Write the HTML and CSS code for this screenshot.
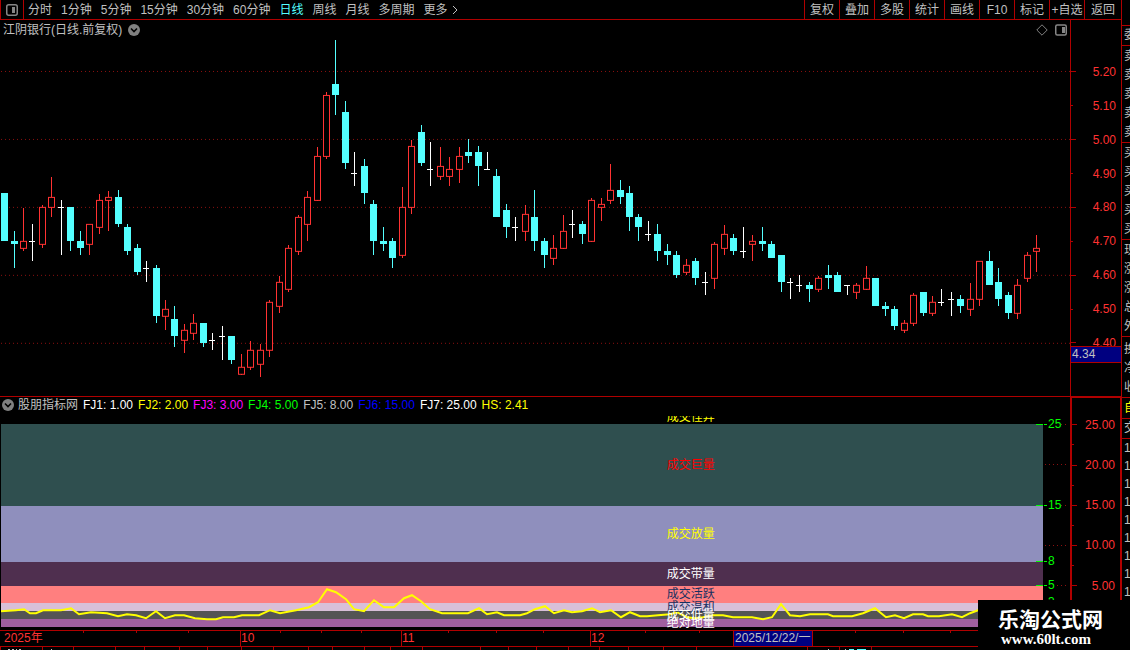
FILE: index.html
```html
<!DOCTYPE html>
<html lang="zh-CN">
<head>
<meta charset="utf-8">
<title>江阴银行 日线</title>
<link rel="stylesheet" href="styles.css">
</head>
<body>
<div class="terminal">
  <main class="workspace">
    <header class="toolbar">
      <button class="layout-toggle" aria-label="布局">
        <svg width="12" height="12" viewBox="0 0 12 12"><rect x="0.75" y="0.75" width="10.5" height="10.5" rx="2" fill="none" stroke="#868686" stroke-width="1.5"/><rect x="6" y="3" width="3" height="6" fill="#868686"/></svg>
      </button>
      <nav class="periods">
        <button>分时</button>
        <button>1分钟</button>
        <button>5分钟</button>
        <button>15分钟</button>
        <button>30分钟</button>
        <button>60分钟</button>
        <button class="active">日线</button>
        <button>周线</button>
        <button>月线</button>
        <button>多周期</button>
        <button class="more">更多 <svg width="6" height="10" viewBox="0 0 6 10"><path d="M1 1l4 4-4 4" fill="none" stroke="#c0c0c0"/></svg></button>
      </nav>
      <div class="tools">
        <button>复权</button>
        <button>叠加</button>
        <button>多股</button>
        <button>统计</button>
        <button>画线</button>
        <button>F10</button>
        <button>标记</button>
        <button>+自选</button>
        <button>返回</button>
      </div>
    </header>

    <section class="panel price">
      <div class="plot">
        <svg class="canvas" id="candles" viewBox="0 20 1070 376" preserveAspectRatio="none" aria-label="K线图"></svg>
        <div class="title">
          <h1>江阴银行(日线.前复权)</h1>
          <svg width="12" height="12" viewBox="0 0 12 12"><circle cx="6" cy="6" r="6" fill="#808080"/><path d="M3 4.5l3 3 3-3" fill="none" stroke="#000" stroke-width="1.6"/></svg>
          <span class="title-icons">
            <svg width="12" height="12" viewBox="0 0 12 12"><path d="M6 .8L11.2 6 6 11.2.8 6z" fill="none" stroke="#808080"/></svg>
            <svg width="12" height="12" viewBox="0 0 12 12"><rect x="0.75" y="1" width="10.5" height="10" rx="1.5" fill="none" stroke="#868686" stroke-width="1.5"/><rect x="7" y="3" width="3" height="6" fill="#868686"/></svg>
          </span>
        </div>
      </div>
      <div class="axis">
        <ol>
          <li>5.20</li><li class="minor">5.10</li><li>5.00</li><li class="minor">4.90</li><li>4.80</li><li class="minor">4.70</li><li>4.60</li><li class="minor">4.50</li><li>4.40</li>
        </ol>
        <span class="cursor-price">4.34</span>
      </div>
    </section>

    <section class="panel turnover">
      <div class="plot">
        <div class="legend">
          <svg width="12" height="12" viewBox="0 0 12 12"><circle cx="6" cy="6" r="6" fill="#808080"/><path d="M3 4.5l3 3 3-3" fill="none" stroke="#000" stroke-width="1.6"/></svg>
          <span class="grey">股朋指标网</span>
          <span class="white">FJ1: 1.00</span>
          <span class="yellow">FJ2: 2.00</span>
          <span class="magenta">FJ3: 3.00</span>
          <span class="green">FJ4: 5.00</span>
          <span class="grey">FJ5: 8.00</span>
          <span class="blue">FJ6: 15.00</span>
          <span class="white">FJ7: 25.00</span>
          <span class="yellow">HS: 2.41</span>
        </div>
        <div class="zones">
          <div class="bands">
            <div class="band extreme yellow"><span>成交怪异</span></div>
            <div class="band huge"><span>成交巨量</span></div>
            <div class="band heavy yellow"><span>成交放量</span></div>
            <div class="band raised white"><span>成交带量</span></div>
            <div class="band active-zone navy"><span>成交活跃</span></div>
            <div class="band mild navy"><span>成交温和</span></div>
            <div class="band low white"><span>成交低量</span></div>
            <div class="band floor white"><span>绝对地量</span></div>
          </div>
          <svg class="canvas" viewBox="0 416 1070 214" preserveAspectRatio="none">
            <g stroke="#8c1010" stroke-dasharray="1 3" shape-rendering="crispEdges">
              <path d="M1061 424.5h8M1045 464.5h24M1061 505.5h8M1045 545.5h24M1057 585.5h12"/>
            </g>
            <g stroke="#00ff00" stroke-dasharray="7 1" shape-rendering="crispEdges">
              <path d="M1036 424.5h11M1036 505.5h11M1036 561.5h11M1036 585.5h11"/>
            </g>
            <g class="levels">
              <text x="1048" y="428">25</text>
              <text x="1048" y="509">15</text>
              <text x="1048" y="565">8</text>
              <text x="1048" y="589">5</text>
              <text x="1048" y="606">3</text>
            </g>
            <polyline fill="none" stroke="#ffff00" stroke-width="2" points="1,611 16,610 24,609 30,613 36,613 43,610 61,610 71,608 79,614 91,612 107,613 118,616 127,614 136,615 146,618 156,611 165,618 175,615 184,615 195,618 207,619 216,619 223,617 234,617 242,615 259,615 270,610 280,613 296,610 309,607 318,602 327,589 336,592 346,599 354,609 364,611 374,600 384,607 394,607 404,598 412,595 421,601 430,609 442,613 468,613 479,608 487,614 497,612 504,615 520,615 527,613 535,609 545,606 554,613 564,610 572,612 582,611 592,608 600,612 611,610 621,617 630,612 640,616 647,616 658,615 670,614 677,612 687,617 695,618 703,617 713,615 723,615 733,617 752,617 763,619 772,617 781,604 790,615 800,616 810,614 828,614 833,616 852,616 863,613 875,608 886,617 895,615 904,618 913,614 923,614 928,616 939,616 952,614 962,617 970,613 978,610 1000,604 1043,607"/>
          </svg>
        </div>
      </div>
      <div class="axis">
        <ol>
          <li>25.00</li><li class="minor"></li><li>20.00</li><li class="minor"></li><li>15.00</li><li class="minor"></li><li>10.00</li><li class="minor"></li><li>5.00</li>
        </ol>
      </div>
    </section>

    <section class="timeline">
      <span>2025年</span>
      <span>10</span>
      <span>11</span>
      <span>12</span>
      <time class="cursor-date" datetime="2025-12-22">2025/12/22/一</time>
      <span></span>
      <svg class="canvas" viewBox="0 631 1121 15" preserveAspectRatio="none" shape-rendering="crispEdges"><path stroke="#b00000" d="M83.5 631v2M136.5 631v2M188.5 631v2M280.5 631v2M321.5 631v2M361.5 631v2M448.5 631v2M496.5 631v2M543.5 631v2M645.5 631v2M699.5 631v2M855.5 631v2M903.5 631v2M950.5 631v2"/></svg>
    </section>

    <footer class="tabs-edge">
      <svg class="canvas" viewBox="0 647 1121 3" preserveAspectRatio="none" shape-rendering="crispEdges">
        <path stroke="#b00000" d="M.5 647v3M42.5 647v3M73.5 647v3M115.5 647v3M144.5 647v3M179.5 647v3M207.5 647v3M241.5 647v3M273.5 647v3M308.5 647v3M332.5 647v3M364.5 647v3M390.5 647v3M422.5 647v3M480.5 647v3M508.5 647v3M536.5 647v3M568.5 647v3M599.5 647v3M628.5 647v3M663.5 647v3M696.5 647v3M807.5 647v3M839.5 647v3M871.5 647v3"/>
        <path stroke="#c0c0c0" d="M8 649.5h2M12 649.5h2M16 649.5h1M19 649.5h2M51 649.5h1M828 649.5h1M845 649.5h1"/>
        <path stroke="#54ffff" d="M849 649.5h5M857 649.5h9"/>
      </svg>
    </footer>
  </main>

  <aside class="quotes">
    <ul class="group lead"></ul>
    <ul class="group one"><li>委</li></ul>
    <ul class="group"><li>卖</li><li>卖</li><li>卖</li><li>卖</li><li>卖</li></ul>
    <ul class="group"><li>买</li><li>买</li><li>买</li><li>买</li><li>买</li></ul>
    <ul class="group"><li>现</li><li>涨</li><li>涨</li><li>总</li><li>外</li></ul>
    <ul class="group three"><li>换</li><li>净</li><li>收</li></ul>
    <ul class="group one yellow"><li>自</li></ul>
    <ul class="group one"><li>交</li></ul>
    <ul class="group ticks"><li>1</li><li>1</li><li>1</li><li>1</li><li>1</li><li>1</li><li>1</li><li>1</li><li>1</li></ul>
  </aside>

  <div class="brand">
    <strong>乐淘公式网</strong>
    <a href="#">www.60lt.com</a>
  </div>
</div>
<script src="chart.js"></script>
</body>
</html>
```

FILE: styles.css
```css
* { box-sizing: border-box; }

:root {
  --line: #b00000;
  --red: #ff3232;
  --text: #c0c0c0;
  --cursor: #000080;
}

body {
  margin: 0;
  background: #000;
  color: var(--text);
  font: 12px/14px "Liberation Sans", "Noto Sans CJK SC", sans-serif;
}

h1 { margin: 0; font: inherit; }
ol, ul { margin: 0; padding: 0; list-style: none; }
svg { display: block; }

button {
  padding: 0;
  border: 0;
  background: none;
  color: inherit;
  font: inherit;
  white-space: nowrap;
  cursor: pointer;
}

.terminal {
  position: relative;
  display: grid;
  grid-template-columns: minmax(0, 1fr) 9px;
  height: 100vh;
  min-height: 480px;
  overflow: hidden;
}

.workspace {
  display: flex;
  flex-direction: column;
  min-width: 0;
  min-height: 0;
}

.canvas {
  position: absolute;
  inset: 0;
  width: 100%;
  height: 100%;
}

/* Toolbar */
.toolbar {
  display: flex;
  flex: 0 0 20px;
  border-bottom: 1px solid var(--line);
}

.layout-toggle {
  display: flex;
  align-items: center;
  justify-content: center;
  width: 24px;
  border: solid var(--line);
  border-width: 0 1px;
}

.layout-toggle svg { flex: none; }

.periods { display: flex; gap: 9px; padding-left: 4px; }
.periods .active { color: #54ffff; }
.periods .more { display: flex; align-items: center; gap: 4px; }

.tools { display: flex; margin-left: auto; }
.tools button { width: 35px; border-left: 1px solid var(--line); }
.tools button:last-child { width: 37px; }

/* Panels */
.panel {
  display: grid;
  grid-template-columns: minmax(0, 1fr) 51px;
  min-height: 0;
  border-bottom: 1px solid var(--line);
}

.price { flex: 377 1 0; }
.turnover { flex: 234 1 0; }

.plot { position: relative; min-width: 0; }

.title {
  position: relative;
  display: flex;
  align-items: center;
  gap: 6px;
  padding: 3px 3px 0;
}

.title-icons { display: flex; gap: 7px; margin-left: auto; }

.axis {
  position: relative;
  min-height: 0;
  border-left: 1px solid var(--line);
  color: var(--red);
}

.axis ol { display: flex; flex-direction: column; height: 100%; }
.axis ol::after { content: ""; flex: 36 1 0; }

.axis li {
  display: flex;
  flex: 34 1 0;
  align-items: center;
  justify-content: space-between;
  min-height: 0;
  padding-right: 5px;
}

.axis li::before { content: ""; width: 5px; height: 1px; background: var(--line); }
.axis .minor::before { width: 2px; }
.price ol { padding-top: 35px; }

.cursor-price {
  position: absolute;
  top: 86.7%;
  left: 0;
  right: 0;
  height: 17px;
  padding-left: 1px;
  border: solid var(--line);
  border-width: 1px 0;
  background: var(--cursor);
  color: var(--text);
  line-height: 15px;
}

.turnover .axis {
  border: solid var(--line);
  border-width: 1px 1px 0 2px;
}

.turnover ol { padding-top: 17px; }
.turnover ol::after { flex: 34 1 0; }
.turnover .axis li { flex: 20 1 0; }

/* Turnover zones */
.turnover .plot { display: flex; flex-direction: column; }

.legend {
  display: flex;
  flex: 0 0 19px;
  align-items: center;
  gap: 5px;
  padding: 0 2px 2px;
  white-space: nowrap;
}

.legend svg { margin-right: -1px; }

.zones {
  position: relative;
  display: flex;
  flex: 1;
  min-height: 0;
  padding: 0 27px 3px 1px;
}

.bands { display: flex; flex: 1; flex-direction: column; }

.band {
  display: flex;
  align-items: center;
  min-height: 0;
  padding-left: 63.9%;
}

.band span { z-index: 2; }

.extreme { flex: 8 1 0; align-items: flex-end; overflow: hidden; }
.huge { flex: 82 1 0; background: #2f4f4f; color: #ff0000; }
.heavy { flex: 56 1 0; background: #8f8fbd; }
.raised { flex: 24 1 0; background: #4f2f4f; }
.active-zone { flex: 17 1 0; background: #ff7f7f; }
.mild { flex: 8 1 0; background: #d8bfd8; }
.low { flex: 8 1 0; background: #545454; }
.floor { flex: 8 1 0; background: #9f5f9f; }

.zones .canvas { z-index: 1; }
.levels { fill: #00ff00; }

.white { color: #fff; }
.yellow { color: #ffff00; }
.magenta { color: #ff00ff; }
.green { color: #00ff00; }
.blue { color: #0000ff; }
.grey { color: var(--text); }
.navy { color: #183060; }

/* Timeline */
.timeline {
  position: relative;
  display: grid;
  flex: 0 0 16px;
  grid-template-columns: 240fr 161fr 189fr 143fr 79fr 309fr;
  border-bottom: 1px solid var(--line);
  color: var(--red);
  line-height: 15px;
}

.timeline > span,
.cursor-date { border-left: 1px solid var(--line); white-space: nowrap; }
.timeline > span:first-child { padding-left: 4px; border: 0; }

.cursor-date { padding-left: 1px; background: var(--cursor); color: var(--text); }

.tabs-edge { position: relative; flex: 0 0 3px; }

/* Quote list at the window edge */
.quotes { overflow: hidden; border-left: 1px solid var(--line); }
.group { padding: 1px 0 0 2px; border-bottom: 1px solid var(--line); line-height: 19px; white-space: nowrap; }
.group.lead { height: 26px; }
.group.one { padding-top: 0; }
.group.three { padding-top: 3px; }
.group.one.yellow { padding-top: 1px; }
.group.ticks { padding: 0 0 0 2px; border: 0; line-height: 18px; }

/* Site mark */
.brand {
  position: absolute;
  right: 0;
  bottom: 0;
  z-index: 3;
  width: 152px;
  height: 50px;
  padding: 7px 0 0 20px;
  background: #000;
  color: #fff;
}

.brand strong { display: block; font: 700 21px/22px "Noto Sans CJK SC", sans-serif; }
.brand a { display: block; padding-left: 3px; color: #fff; font: 700 15px/20px "Liberation Serif", serif; text-decoration: none; }
```

FILE: chart.js
```js
// Each candle: centre x, kind (D falling, U rising, W flat), high, body top, body bottom, low
const candles = [
  [4,"D",193,193,241,241],[14,"D",231,241,244,268],[23,"U",208,241,249,251],[32,"W",224,241,242,261],
  [42,"U",205,207,245,248],[51,"U",177,197,208,217],[61,"W",200,207,208,255],[70,"D",207,207,241,251],
  [80,"D",231,241,248,255],[89,"U",224,224,245,255],[99,"U",194,200,228,234],[108,"U",191,197,201,231],
  [118,"D",190,197,224,227],[127,"D",224,227,251,255],[137,"D",244,248,272,275],[146,"W",261,268,269,282],
  [156,"D",265,268,316,323],[165,"U",300,309,317,330],[174,"D",306,319,336,347],[184,"U",324,330,341,353],
  [193,"U",314,323,334,340],[203,"D",323,323,343,347],[212,"W",333,340,341,350],[222,"W",326,336,337,360],
  [231,"D",336,336,360,364],[241,"U",354,367,375,375],[250,"U",341,350,368,370],[260,"U",344,350,365,377],
  [269,"U",300,302,351,357],[279,"U",276,282,307,313],[288,"U",245,248,290,292],[298,"U",215,217,252,255],
  [307,"U",191,197,225,241],[317,"U",147,156,201,201],[326,"U",92,95,157,159],[335,"D",40,84,95,115],
  [345,"D",101,112,163,169],[354,"W",152,173,174,186],[364,"D",159,166,193,204],[373,"D",200,204,241,255],
  [383,"D",227,241,244,251],[392,"D",238,241,258,268],[402,"U",187,207,256,258],[411,"U",140,146,208,214],
  [421,"D",125,132,163,166],[430,"W",142,169,170,186],[440,"U",147,166,177,180],[449,"U",157,169,177,186],
  [459,"U",147,156,170,183],[468,"D",139,152,156,163],[478,"D",146,152,166,186],[487,"W",152,169,170,170],
  [496,"D",169,176,217,217],[506,"D",204,210,227,238],[515,"W",217,227,228,241],[525,"U",205,214,232,241],
  [534,"D",190,217,241,251],[544,"D",238,241,255,268],[553,"U",235,248,259,265],[563,"U",215,231,249,249],
  [572,"W",210,224,225,238],[582,"D",221,224,234,244],[591,"U",198,200,242,242],[601,"U",198,204,208,221],
  [610,"U",164,190,201,204],[620,"D",180,190,197,204],[629,"D",186,193,217,231],[638,"D",214,217,227,241],
  [648,"W",221,234,235,241],[657,"D",224,234,251,261],[667,"D",244,251,255,265],[676,"D",251,255,275,278],
  [686,"U",259,265,273,275],[695,"D",258,261,278,285],[705,"W",272,282,283,295],[714,"U",242,244,279,289],
  [724,"U",225,234,249,255],[733,"D",234,238,251,255],[743,"W",227,251,252,258],[752,"U",235,241,245,261],
  [762,"D",227,241,244,251],[771,"D",241,244,258,258],[781,"D",255,255,282,292],[790,"W",278,282,283,299],
  [799,"W",275,285,286,292],[809,"D",282,285,289,302],[818,"U",276,278,290,292],[828,"D",265,275,278,289],
  [837,"D",272,275,292,292],[847,"W",285,285,286,295],[856,"U",283,285,293,299],[866,"U",266,278,290,290],
  [875,"D",278,278,306,306],[885,"D",302,306,309,316],[894,"D",306,309,326,330],[904,"U",320,323,331,333],
  [913,"U",293,295,324,326],[923,"D",292,292,313,316],[932,"U",296,302,314,316],[941,"W",289,302,303,306],
  [951,"W",292,299,300,316],[960,"D",295,299,306,313],[970,"U",283,299,310,316],[979,"U",261,261,300,306],
  [989,"D",251,261,285,285],[998,"D",268,282,299,306],[1008,"D",292,295,313,319],[1017,"U",279,285,314,319],
  [1027,"U",252,255,279,282],[1036,"U",235,248,252,272]
];

const colours = { D: "#54ffff", U: "#ff3232", W: "#ffffff" };

const grid = [71, 139, 207, 275, 343]
  .map(y => `<path d="M1 ${y + 0.5}H1070" stroke="#8c1010" stroke-dasharray="1 3"/>`)
  .join("");

const marks = candles.map(([x, kind, high, top, bottom, low]) => {
  const colour = colours[kind];
  const wick = `<rect x="${x}" y="${high}" width="1" height="${low - high}" fill="${colour}"/>`;
  if (kind === "U") {
    return wick + `<rect x="${x - 2.5}" y="${top + 0.5}" width="6" height="${bottom - top - 1}" fill="#000" stroke="${colour}"/>`;
  }
  const width = kind === "D" ? 7 : 6;
  return wick + `<rect x="${x - 3}" y="${top}" width="${width}" height="${bottom - top}" fill="${colour}"/>`;
}).join("");

document.getElementById("candles").innerHTML = `<g shape-rendering="crispEdges">${grid}${marks}</g>`;
```
